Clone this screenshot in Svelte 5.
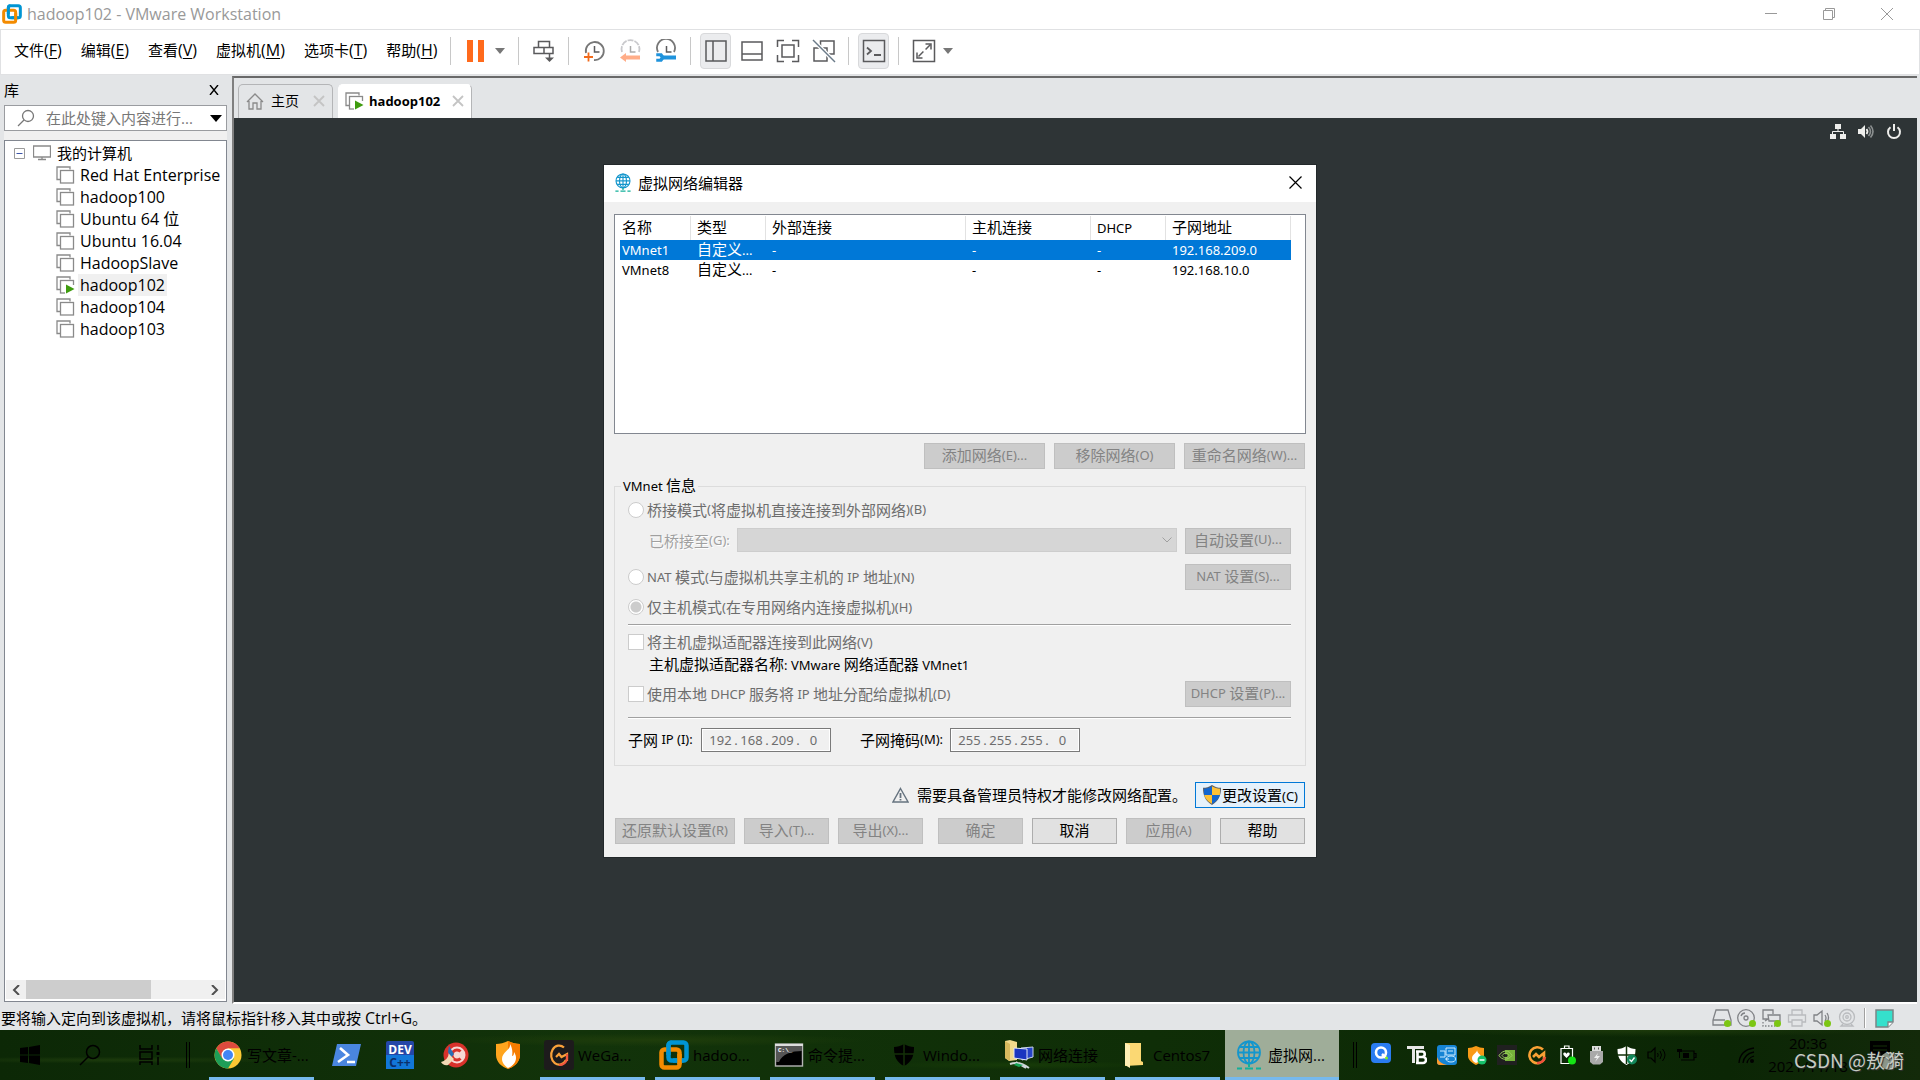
<script lang="ts">
	type Task = { icon: string; label?: string; open?: boolean; active?: boolean };

	const menus = [
		{ label: '文件', key: 'F' },
		{ label: '编辑', key: 'E' },
		{ label: '查看', key: 'V' },
		{ label: '虚拟机', key: 'M' },
		{ label: '选项卡', key: 'T' },
		{ label: '帮助', key: 'H' }
	];

	const tools = [
		[{ icon: 'send', title: '发送 Ctrl+Alt+Del' }],
		[
			{ icon: 'snapshot', title: '拍摄快照' },
			{ icon: 'revert', title: '恢复快照' },
			{ icon: 'manage', title: '管理快照' }
		],
		[
			{ icon: 'sidebar', title: '显示库', pressed: true },
			{ icon: 'thumbs', title: '显示缩略图' },
			{ icon: 'full', title: '全屏' },
			{ icon: 'unity', title: 'Unity' }
		],
		[{ icon: 'console', title: '控制台视图', pressed: true }]
	];

	const machines = [
		'Red Hat Enterprise L',
		'hadoop100',
		'Ubuntu 64 位',
		'Ubuntu 16.04',
		'HadoopSlave',
		'hadoop102',
		'hadoop104',
		'hadoop103'
	];
	const running = 'hadoop102';

	const columns = [
		{ label: '名称', width: 71 },
		{ label: '类型', width: 75 },
		{ label: '外部连接', width: 200 },
		{ label: '主机连接', width: 125 },
		{ label: 'DHCP', width: 75 },
		{ label: '子网地址', width: 125 }
	];
	const networks = [
		['VMnet1', '自定义...', '-', '-', '-', '192.168.209.0'],
		['VMnet8', '自定义...', '-', '-', '-', '192.168.10.0']
	];
	let selected = $state(0);

	const tasks: Task[] = [
		{ icon: 'chrome', label: '写文章-...', open: true },
		{ icon: 'powershell' },
		{ icon: 'dev' },
		{ icon: 'ccleaner' },
		{ icon: 'fire' },
		{ icon: 'wegame', label: 'WeGa...', open: true },
		{ icon: 'vmware', label: 'hadoo...', open: true },
		{ icon: 'cmd', label: '命令提...', open: true },
		{ icon: 'defender', label: 'Windo...', open: true },
		{ icon: 'netfolder', label: '网络连接', open: true },
		{ icon: 'folder', label: 'Centos7', open: true },
		{ icon: 'globe', label: '虚拟网...', open: true, active: true }
	];
	const tray = ['typora', 'intel', 'fireMini', 'nvidia', 'wegameMini', 'health', 'usb', 'shieldOk', 'volume', 'battery', '', 'wifi'];
	const devices = ['disk', 'cd', 'net', 'printer', 'sound', 'webcam'];

	// Latin runs are set smaller than the Chinese around them
	const runs = (text: string) => text.split(/([\x20-\x7e]+)/).filter(Boolean);
	const isLatin = (run: string) => /^[\x20-\x7e]/.test(run);
</script>

{#snippet mix(text: string)}
	{#each runs(text) as run}{#if isLatin(run)}<span class="en">{run}</span>{:else}{run}{/if}{/each}
{/snippet}

{#snippet vmware(size: number)}
	<svg width={size} height={size} viewBox="0 0 30 30" fill="none" stroke-width="4.5" aria-hidden="true">
		<rect x="9.5" y="2.5" width="18" height="18" rx="3" stroke="#0095d3" />
		<rect x="2.5" y="9.5" width="18" height="18" rx="3" stroke="#f38b00" />
		<path d="M9.5 15V5.5a3 3 0 0 1 3-3" stroke="#0095d3" />
		<path d="M14 20.5H24.5" stroke="#0095d3" />
		<path d="M20.5 14v10" stroke="#f38b00" />
	</svg>
{/snippet}

{#snippet globe(w: number, h: number)}
	<svg width={w} height={h} viewBox="0 0 24 30" fill="none" stroke="#1496cc" stroke-width="1.8" aria-hidden="true">
		<circle cx="12" cy="12.5" r="11" />
		<ellipse cx="12" cy="12.5" rx="5.5" ry="11" />
		<path d="M12 1.5v22M1 12.5h22M3 7h18M3 18h18" />
		<path d="M12 23.5V27M8 28.5h8M0 28.5h5M19 28.5h5" stroke="#12b09a" stroke-width="2" />
	</svg>
{/snippet}

{#snippet vmIcon(on: boolean)}
	<svg class="vm-icon" width="19" height="18" viewBox="0 0 19 18" fill="#fff" stroke="#8a8a8a" aria-hidden="true">
		<path d="M14 3.5V1H1V13.5H4" fill="none" stroke-width="1.3" />
		<rect x="4.5" y="4.5" width="13" height="12.5" stroke-width="1.3" />
		{#if on}
			<path d="M9 9h10v9H9z" stroke="none" />
			<path d="M10 8.500v9l8.500-4.500z" fill="#3f9c0f" stroke="none" />
		{/if}
	</svg>
{/snippet}

{#snippet toolIcon(name: string)}
	<svg width="24" height="24" viewBox="0 0 24 24" fill="none" stroke="#5a5a5c" stroke-width="1.5" aria-hidden="true">
		{#if name === 'send'}
			<path d="M6.500 8V2.500h11V8M2 8.500h10v6H2zM12 8.500h9v6h-9" />
			<path d="M17.500 14.500v6" />
			<path d="M13 18.500h9L17.500 23z" fill="#5a5a5c" stroke="none" />
		{:else if name === 'snapshot'}
			<path d="M4 14A9 9 0 1 1 12 21" stroke-width="1.8" stroke="#777" />
			<path d="M12.500 7v6h5" />
			<path d="M2 18h9M6.500 13.500v9" stroke="#f26a1b" stroke-width="1.8" />
		{:else if name === 'revert'}
			<path d="M4 13A9 9 0 1 1 21 13" stroke="#c9c9cc" stroke-width="1.8" stroke-dasharray="6 1" />
			<path d="M12.500 7v6h5" stroke="#aaa" />
			<path d="M22 18.500H7" stroke="#ffad88" stroke-width="4" />
			<path d="M8 14v9l-6-4.500z" fill="#ffad88" stroke="none" />
		{:else if name === 'manage'}
			<path d="M4 13A9 9 0 1 1 20 13" stroke="#777" stroke-width="1.8" />
			<path d="M12.500 7v6h5" />
			<path d="M8 18.500h14" stroke="#1f93dc" stroke-width="4" />
			<path d="M3 15h4.500l2.500 3.500L7.500 22H3v-1.500h3l1.500-2-1.500-2H3z" fill="#1f93dc" stroke="#1f93dc" />
		{:else if name === 'sidebar'}
			<path d="M2 2h20v20H2zM9 2v20" />
		{:else if name === 'thumbs'}
			<path d="M2 3h20v18H2zM2 15h20" />
		{:else if name === 'full'}
			<path d="M1.500 8V1.500H8M16 1.500h6.500V8M22.500 16v6.500H16M8 22.500H1.500V16" />
			<path d="M6 6h12v12H6z" />
		{:else if name === 'unity'}
			<path d="M8.500 9V2H22v13h-7" />
			<path d="M2 9h13v13H2z" />
			<path d="M1 1l22 22" stroke="#fff" stroke-width="4" />
			<path d="M1 1l22 22" stroke="#6a7a88" />
		{:else if name === 'console'}
			<path d="M1.500 1.500h21v21h-21z" />
			<path d="M5 8.500l4 3.500-4 3.500M12 16h7" stroke-width="1.8" />
		{:else if name === 'expand'}
			<path d="M1.500 1.500h21v21h-21z" />
			<path d="M13.500 5H19v5.500M5 13.500V19h5.500" />
			<path d="M18.500 5.500l-13 13" stroke-dasharray="7 3" />
		{/if}
	</svg>
{/snippet}

{#snippet shield(size: number)}
	<svg width={size} height={size} viewBox="0 0 20 20" aria-hidden="true">
		<path d="M10 0c3 2 6 2.800 9 2.800C19 10 17 16 10 20 3 16 1 10 1 2.800 4 2.800 7 2 10 0z" fill="#5a5f66" />
		<path d="M10 1.300V10H2.200C2 8 1.900 6 2 3.800 5 3.700 7.500 3 10 1.300z" fill="#1266cf" />
		<path d="M10 1.300V10h7.800c.2-2 .3-4 .2-6.200-3-.1-5.500-.8-8-2.500z" fill="#fdc136" />
		<path d="M2.200 10H10v8.800C5 16 3 13 2.200 10z" fill="#fdc136" />
		<path d="M17.800 10H10v8.800c5-2.800 7-5.800 7.800-8.800z" fill="#1266cf" />
	</svg>
{/snippet}

{#snippet taskIcon(name: string)}
	{#if name === 'vmware'}
		{@render vmware(30)}
	{:else if name === 'globe'}
		{@render globe(24, 30)}
	{:else}
		<svg width="30" height="30" viewBox="0 0 30 30" aria-hidden="true">
			{#if name === 'chrome'}
				<circle cx="15" cy="15" r="13.5" fill="#fbc934" />
				<path d="M3.300 8.300A13.500 13.500 0 0 1 26.700 8.300H15L9 18.500z" fill="#dd4b3e" />
				<path d="M3.300 8.300A13.500 13.500 0 0 0 15 28.500L21 18.500 9.200 18.500z" fill="#1e9e58" />
				<circle cx="15" cy="15" r="6.5" fill="#fff" />
				<circle cx="15" cy="15" r="5" fill="#4285f4" />
			{:else if name === 'powershell'}
				<path d="M6 4h24l-5 22H1z" fill="#4a86e0" />
				<path d="M9 8l8 7-10 7M16 22h8" fill="none" stroke="#fff" stroke-width="2.6" />
			{:else if name === 'dev'}
				<rect x="1" y="1" width="28" height="28" rx="2" fill="#2447a8" />
				<path d="M1 15h28v14H1z" fill="#1277d8" />
				<text x="15" y="13.5" text-anchor="middle" class="dev-top">DEV</text>
				<text x="15" y="27" text-anchor="middle" class="dev-bottom">C++</text>
			{:else if name === 'ccleaner'}
				<circle cx="17" cy="15" r="12.5" fill="#d8322b" />
				<circle cx="18" cy="15" r="8.5" fill="#f6d8d4" />
				<path d="M21.500 11.500a5 5 0 1 0 0 7" fill="none" stroke="#d8322b" stroke-width="3" />
				<path d="M10 6l5 8-3 4-3-6z" fill="#2a6fb5" />
				<path d="M10 14l5 5-6 6c-3 1-6-1-7-3 4-1 7-4 8-8z" fill="#f3d9b5" />
			{:else if name === 'fire'}
				<path d="M15 1c4 2 8 3 12 3v11c0 7-6 12-12 14C9 27 3 22 3 15V4c4 0 8-1 12-3z" fill="#ffa51e" />
				<path d="M15 1c4 2 8 3 12 3v11c0 7-6 12-12 14z" fill="#f57c00" />
				<path d="M17 4c1 6-8 8-8 15 0 4 3 7 6 9 5-2 8-6 8-10 0-3-1-4-2-6 0 3-1 4-2 4 1-4 0-9-2-12z" fill="#fff" />
			{:else if name === 'wegame'}
				<rect width="30" height="30" rx="3" fill="#1d1b1c" />
				<path d="M20 7.500A8 9.500 0 1 0 22 20M12 17l3-3 2.500 3 5.500-3v7" fill="none" stroke="#f9a13a" stroke-width="2.2" />
				<path d="M15 25c4 0 7-2 8-6v-5" fill="none" stroke="#f2573e" stroke-width="2.2" />
			{:else if name === 'cmd'}
				<rect x="1.5" y="4" width="27" height="22" fill="#000" stroke="#b5b5b5" stroke-width="1.4" />
				<path d="M2 5h26v6C18 11 8 14 5 22H2z" fill="#555" />
				<path d="M1 4h28v2H1z" fill="#ddd" />
				<text x="4" y="12" class="cmd-text">C:\_</text>
			{:else if name === 'defender'}
				<path d="M15 4c3 2 7 3 10 3 0 9-2 15-10 19C7 22 5 16 5 7c3 0 7-1 10-3z" fill="#000" />
				<path d="M15 4v22M5 14h20" stroke="#143008" stroke-width="1.5" />
			{:else if name === 'netfolder'}
				<path d="M1 1l5-1 7 2v18l-8 1-4-3z" fill="#f0d98c" />
				<path d="M1 1l5 3v17l-5-3z" fill="#d7b95e" />
				<path d="M17 8l12-1v10l-11 3z" fill="#2744c8" stroke="#c9d4ea" />
				<path d="M10 8l13 1v11l-13-2z" fill="#1a35c0" stroke="#dfe6f4" />
				<path d="M6 24c6-2 12-1 19 4M12 22l10 6" fill="none" stroke="#cfd5d9" stroke-width="2" />
				<path d="M12 23l7 2-4 2-5-2z" fill="#18a558" />
			{:else if name === 'folder'}
				<path d="M6 3h16v18l2 1v3l-18 1z" fill="#fbd873" />
				<path d="M6 3l5 2v23l-5-3z" fill="#fff0b5" />
			{/if}
		</svg>
	{/if}
{/snippet}

{#snippet trayIcon(name: string)}
	<svg width="20" height="20" viewBox="0 0 20 20" fill="none" aria-hidden="true">
		{#if name === 'q'}
			<rect width="20" height="20" rx="4" fill="#2a7cf0" />
			<circle cx="10" cy="9.5" r="5" stroke="#fff" stroke-width="2.6" />
			<path d="M11 11l4 4" stroke="#fff" stroke-width="2.5" />
			<circle cx="15.5" cy="15" r="1.5" fill="#7ff01c" />
		{:else if name === 'typora'}
			<path d="M0 2.500h17M6.500 2v16" stroke="#e6e6e6" stroke-width="3" />
			<path d="M10.500 5.500v13M9 6.500h6a2.500 2.500 0 0 1 0 5.500h-5 6a3 3 0 0 1 0 6H9" stroke="#fff" stroke-width="2.6" />
		{:else if name === 'intel'}
			<rect width="20" height="20" rx="3" fill="#1684d4" />
			<path d="M0 12c2 5 5 7 10 8H3a3 3 0 0 1-3-3z" fill="#ff9c2b" />
			<path d="M9 3h9v7H9zM3 6h5v6H3M11 6h5M8 14h4" stroke="#cbeaff" />
			<ellipse cx="14" cy="14" rx="4.5" ry="3" stroke="#cbeaff" />
		{:else if name === 'fireMini'}
			<path d="M9 1c3 1 5 2 8 2v8c0 4-4 7-8 9-4-2-8-5-8-9V3c3 0 5-1 8-2z" fill="#f99a17" />
			<path d="M10 4c1 4-5 5-5 9 0 3 2 4 4 5 3-1 5-3 5-6 0-3-4-3-4-8z" fill="#fff" />
			<circle cx="15" cy="15" r="4.5" fill="#18c06b" />
			<path d="M12.500 15h5" stroke="#fff" stroke-width="1.5" />
		{:else if name === 'nvidia'}
			<rect width="20" height="20" fill="#202020" />
			<path d="M8 5h10v11H8z" fill="#76b13a" />
			<path d="M2 10.500c4-6 10-6 13 0-4 5-10 5-13 0zM5 10.500c2-3 6-3 7 0-2 3-5 3-7 0z" stroke="#9bd05e" />
			<circle cx="9" cy="10.5" r="1.5" fill="#202020" />
		{:else if name === 'wegameMini'}
			<path d="M16 4.500A8 8 0 1 0 17.500 14M6 12l3-3 3 3 5-4v6" stroke="#f9a135" stroke-width="2.6" />
			<path d="M10 18c4 0 7-2 8-6" stroke="#ef513d" stroke-width="2.6" />
		{:else if name === 'health'}
			<path d="M4 3.500h11.500v15H4zM7.500 3V1H12v2" stroke="#fff" stroke-width="1.2" />
			<path d="M9.500 13L6.500 10c-1-3 2-3 3-1 1-2 4-2 3 1z" fill="#fff" />
			<circle cx="15" cy="15.5" r="4" fill="#15e415" />
		{:else if name === 'usb'}
			<path d="M5 1h9v5H5z" fill="#ddd" />
			<path d="M7.500 2.500v2M11.500 2.500v2" stroke="#555" />
			<path d="M3 6h13v11l-3 2.500H6L3 17z" fill="#a9a9a9" />
			<path d="M11 8l-4 5h3l-2 4 5-6h-3z" fill="#eee" />
		{:else if name === 'shieldOk'}
			<path d="M9.500 1c3 2 6 3 9 3 0 8-2 12-9 16-7-4-9-8-9-16 3 0 6-1 9-3z" fill="#fff" />
			<path d="M9.500 1v18M0 10h19" stroke="#122f08" stroke-width="1.5" />
			<circle cx="15" cy="14.5" r="5" fill="#12875a" />
			<path d="M12.500 14.500l2 2 3-4" stroke="#fff" stroke-width="1.3" />
		{:else if name === 'volume'}
			<path d="M1 7h3l4-4v14l-4-4H1z" stroke="#000" stroke-width="1.2" />
			<path d="M10.500 8q1.500 2 0 4M13 6q3 4 0 8M15.500 4q5 6 0 12" stroke="#000" />
		{:else if name === 'battery'}
			<path d="M4 6h13v9H4M17.500 8.500h1.500v4h-1.500" stroke="#000" stroke-width="1.2" />
			<path d="M6 8h6v5H6zM0 4h5v3H0zM2 7h1v6H2z" fill="#000" />
		{:else if name === 'wifi'}
			<path d="M2 18Q3 5 17 3M6 18q1-9 11-11M10 18q1-5 7-7" stroke="#000" stroke-width="1.3" />
			<circle cx="15" cy="16" r="2" fill="#000" />
		{/if}
	</svg>
{/snippet}

{#snippet deviceIcon(name: string)}
	<svg width="20" height="20" viewBox="0 0 20 20" fill="none" stroke="#808286" stroke-width="1.3" aria-hidden="true">
		{#if name === 'disk'}
			<path d="M4 2h12l3 10v5H1v-5zM1 12h12" />
		{:else if name === 'cd'}
			<circle cx="9" cy="10" r="8.3" />
			<circle cx="9" cy="10" r="2" />
			<path d="M4 8q1-3 4-3" />
		{:else if name === 'net'}
			<path d="M6 11H1V2h10v4M6 7h12v6H7zM3 13l3-2" />
			<path d="M1 14v4h12" stroke-dasharray="1.5 1.5" />
		{:else if name === 'printer'}
			<path d="M5 7V2h10v5M5 14H1.500V7h17v7H15M5 12h10v6H5z" stroke="#b9bbbe" />
		{:else if name === 'sound'}
			<path d="M2 7h3l5-4v14l-5-4H2zM13 7q2 3 0 6M15 5q3 5 0 9" />
		{:else if name === 'webcam'}
			<g stroke="#b9bbbe">
				<circle cx="10" cy="9" r="7.5" />
				<circle cx="10" cy="9" r="4" />
				<circle cx="10" cy="9" r="1.3" />
				<path d="M6 16l-2 2h12l-2-2" />
			</g>
		{/if}
		{#if name === 'disk' || name === 'cd' || name === 'net' || name === 'sound'}
			<circle cx="15.5" cy="15.5" r="3.5" fill="#7cc613" stroke="none" />
		{/if}
	</svg>
{/snippet}

{#snippet ipField(id: string, parts: string[])}
	<div class="ip-field">
		{#each parts as part, i}
			{#if i > 0}<span class="dot">.</span>{/if}
			<input id={i === 0 ? id : undefined} aria-label={i > 0 ? `${id} ${i + 1}` : undefined} type="text" value={part} disabled />
		{/each}
	</div>
{/snippet}

<div class="app">
	<header class="titlebar">
		{@render vmware(20)}
		<h1>hadoop102 - VMware Workstation</h1>
		<div class="window-controls">
			<button type="button" aria-label="最小化">
				<svg width="14" height="14" viewBox="0 0 14 14" stroke="#999"><path d="M1 6.500h12" /></svg>
			</button>
			<button type="button" aria-label="还原">
				<svg width="14" height="14" viewBox="0 0 14 14" fill="none" stroke="#999">
					<path d="M1.500 3.500h9v9h-9zM3.500 3V1.500h9v9H11" />
				</svg>
			</button>
			<button type="button" aria-label="关闭">
				<svg width="14" height="14" viewBox="0 0 14 14" stroke="#999"><path d="M1 1l12 12M13 1L1 13" /></svg>
			</button>
		</div>
	</header>

	<div class="menubar">
		<nav class="menus">
			{#each menus as menu}
				<button type="button">{menu.label}<span>(<u>{menu.key}</u>)</span></button>
			{/each}
		</nav>
		<span class="sep"></span>
		<div class="tool-group">
			<button type="button" class="tool" aria-label="挂起">
				<svg width="17" height="22" viewBox="0 0 17 22" fill="#ff6a1c"><path d="M0 0h6v22H0zM11 0h6v22h-6z" /></svg>
			</button>
			<button type="button" class="caret" aria-label="电源选项">
				<svg width="10" height="6" viewBox="0 0 10 6" fill="#777"><path d="M0 0h10L5 6z" /></svg>
			</button>
		</div>
		<span class="sep"></span>
		{#each tools as group}
			{#each group as tool}
				<button type="button" class="tool" class:pressed={tool.pressed} aria-label={tool.title}>
					{@render toolIcon(tool.icon)}
				</button>
			{/each}
			<span class="sep"></span>
		{/each}
		<div class="tool-group">
			<button type="button" class="tool" aria-label="拉伸">{@render toolIcon('expand')}</button>
			<button type="button" class="caret" aria-label="拉伸选项">
				<svg width="10" height="6" viewBox="0 0 10 6" fill="#777"><path d="M0 0h10L5 6z" /></svg>
			</button>
		</div>
	</div>

	<div class="workspace">
		<aside class="library">
			<div class="library-head">
				<h2>库</h2>
				<button type="button" aria-label="关闭库">
					<svg width="10" height="10" viewBox="0 0 10 10" stroke="#000" stroke-width="1.4"><path d="M1 0l8 10M9 0L1 10" /></svg>
				</button>
			</div>
			<div class="search">
				<svg width="18" height="18" viewBox="0 0 18 18" fill="none" stroke="#777" stroke-width="1.3" aria-hidden="true">
					<circle cx="11" cy="7" r="5.5" /><path d="M7 11l-6 6" />
				</svg>
				<input type="text" aria-label="搜索" placeholder="在此处键入内容进行..." />
				<button type="button" aria-label="搜索选项">
					<svg width="12" height="7" viewBox="0 0 12 7"><path d="M0 0h12L6 7z" /></svg>
				</button>
			</div>
			<div class="tree">
				<ul>
					<li class="root">
						<svg width="11" height="11" viewBox="0 0 11 11" fill="none" stroke="#9a9a9a" aria-hidden="true">
							<path d="M.5.5h10v10H.5z" /><path d="M2.500 5.500h6" stroke="#3c55a8" />
						</svg>
						<svg width="18" height="16" viewBox="0 0 18 16" fill="none" stroke="#8a8a8a" aria-hidden="true">
							<path d="M.5 1h17v11H.5zM9 12v2M5 14.500h8" stroke-width="1.3" />
						</svg>
						<span>我的计算机</span>
					</li>
					{#each machines as name}
						<li>
							{@render vmIcon(name === running)}
							<span class="machine" class:current={name === running}>{name}</span>
						</li>
					{/each}
				</ul>
				<div class="scrollbar">
					<button type="button" aria-label="向左滚动">
						<svg width="8" height="10" viewBox="0 0 8 10" fill="none" stroke="#505050" stroke-width="2"><path d="M7 0L2 5l5 5" /></svg>
					</button>
					<div class="track"><div class="thumb"></div></div>
					<button type="button" aria-label="向右滚动">
						<svg width="8" height="10" viewBox="0 0 8 10" fill="none" stroke="#505050" stroke-width="2"><path d="M1 0l5 5-5 5" /></svg>
					</button>
				</div>
			</div>
		</aside>

		<main class="console">
			<div class="tabs">
				<div class="tab home">
					<svg width="18" height="17" viewBox="0 0 18 17" fill="none" stroke="#8a8a8a" stroke-width="1.3" aria-hidden="true">
						<path d="M1 9l8-8 8 8M3 8v8h4v-6h4v6h4V8" />
					</svg>
					<span>主页</span>
					<button type="button" aria-label="关闭主页">
						<svg width="12" height="12" viewBox="0 0 12 12" stroke="#c4c4c4" stroke-width="1.8"><path d="M1 1l10 10M11 1L1 11" /></svg>
					</button>
				</div>
				<div class="tab open">
					{@render vmIcon(true)}
					<span>hadoop102</span>
					<button type="button" aria-label="关闭 hadoop102">
						<svg width="12" height="12" viewBox="0 0 12 12" stroke="#c4c4c4" stroke-width="1.8"><path d="M1 1l10 10M11 1L1 11" /></svg>
					</button>
				</div>
			</div>
			<div class="screen">
				<div class="guest-status">
					<svg width="16" height="16" viewBox="0 0 16 16" fill="#eeeeec">
						<path d="M5 0h6v5H5zM0 10h6v5H0zM10 10h6v5h-6z" /><path d="M8 5v3M2.500 10V7.500h11V10" fill="none" stroke="#eeeeec" />
					</svg>
					<svg width="16" height="16" viewBox="0 0 16 16" fill="#eeeeec">
						<path d="M0 5h3l4-4v13l-4-4H0z" />
						<path d="M8.500 5q2 2.500 0 5" fill="none" stroke="#eeeeec" stroke-width="1.8" />
						<path d="M10.500 3q4 4.500 0 9M12.500 1.500q5 6 0 12" fill="none" stroke="#8b8f90" stroke-width="1.6" />
					</svg>
					<svg width="16" height="16" viewBox="0 0 16 16" fill="none" stroke="#eeeeec" stroke-width="2">
						<path d="M8 0v7M4.500 3.200a6 6 0 1 0 7 0" />
					</svg>
				</div>
			</div>
		</main>
	</div>

	<footer class="statusbar">
		<p>要将输入定向到该虚拟机，请将鼠标指针移入其中或按 <span>Ctrl+G</span>。</p>
		<div class="devices">
			{#each devices as device}
				{@render deviceIcon(device)}
			{/each}
			<span class="device-sep"></span>
			<svg width="19" height="19" viewBox="0 0 19 19" aria-hidden="true">
				<path d="M1 1h17v12l-5 5H1z" fill="#35e0cc" stroke="#7b8586" stroke-width="1.5" />
				<path d="M18 13h-5v5" fill="#fff" stroke="#7b8586" stroke-width="1.3" />
			</svg>
		</div>
	</footer>

	<div class="taskbar">
		<button type="button" class="shell" aria-label="开始">
			<svg width="20" height="20" viewBox="0 0 20 20"><path d="M0 3l8-1v7.500H0zM9 2l11-2v9.500H9zM0 10.500h8V18l-8-1zM9 10.500h11V20L9 18z" /></svg>
		</button>
		<button type="button" class="shell" aria-label="搜索">
			<svg width="22" height="22" viewBox="0 0 22 22" fill="none" stroke="#000" stroke-width="1.5"><circle cx="14" cy="8" r="6.5" /><path d="M9.500 12.500L1 21" /></svg>
		</button>
		<button type="button" class="shell" aria-label="任务视图">
			<svg width="22" height="20" viewBox="0 0 22 20" fill="none" stroke="#000" stroke-width="1.5">
				<path d="M1 0v4h12V0M1 7h12v7H1zM1 20v-3h12v3M19 0v5M19 12v8" /><path d="M17.500 7h3v3h-3z" fill="#000" stroke="none" />
			</svg>
		</button>
		<span class="grip"></span>
		<div class="tasks">
			{#each tasks as task}
				<button type="button" class="task" class:open={task.open} class:active={task.active} aria-label={task.label ?? task.icon}>
					{@render taskIcon(task.icon)}
					{#if task.label}<span>{task.label}</span>{/if}
				</button>
			{/each}
		</div>
		<span class="grip"></span>
		<div class="tray">
			<span class="first">{@render trayIcon('q')}</span>
			{#each tray as item}
				<span>{@render trayIcon(item)}</span>
			{/each}
		</div>
		<div class="clock">
			<time>20:36</time>
			<time>2021/11/18</time>
		</div>
		<div class="notices">
			<svg width="30" height="34" viewBox="0 0 30 34" aria-hidden="true">
				<path d="M2 3h20v16H13l-4 4v-4H2z" fill="#000" />
				<path d="M5 8h14M5 12h14" stroke="#143008" />
				<circle cx="21" cy="23" r="9" fill="#8b9589" />
			</svg>
		</div>
		<span class="watermark">CSDN @敖漪</span>
	</div>

	<div class="dialog" role="dialog" aria-labelledby="editor-title">
		<div class="dialog-head">
			{@render globe(16, 19)}
			<h2 id="editor-title">虚拟网络编辑器</h2>
			<button type="button" aria-label="关闭">
				<svg width="13" height="13" viewBox="0 0 13 13" stroke="#000" stroke-width="1.2"><path d="M.5.5l12 12M12.500.5l-12 12" /></svg>
			</button>
		</div>
		<div class="dialog-body">
			<div class="list">
				<table>
					<colgroup>
						{#each columns as column}<col style="width: {column.width}px" />{/each}
					</colgroup>
					<thead>
						<tr>
							{#each columns as column}<th scope="col">{@render mix(column.label)}</th>{/each}
						</tr>
					</thead>
					<tbody>
						{#each networks as row, i}
							<tr class:selected={selected === i} onclick={() => (selected = i)}>
								{#each row as cell}<td>{@render mix(cell)}</td>{/each}
							</tr>
						{/each}
					</tbody>
				</table>
			</div>

			<div class="actions end">
				<button type="button" class="btn wide" disabled>{@render mix('添加网络(E)...')}</button>
				<button type="button" class="btn wide" disabled>{@render mix('移除网络(O)')}</button>
				<button type="button" class="btn wide" disabled>{@render mix('重命名网络(W)...')}</button>
			</div>

			<fieldset>
				<legend>{@render mix('VMnet 信息')}</legend>
				<div class="row first-row">
					<label class="off"><input type="radio" name="mode" disabled />{@render mix('桥接模式(将虚拟机直接连接到外部网络)(B)')}</label>
				</div>
				<div class="row bridge">
					<label class="etched" for="bridge">{@render mix('已桥接至(G):')}</label>
					<div class="select">
						<select id="bridge" disabled><option></option></select>
						<svg width="10" height="6" viewBox="0 0 10 6" fill="none" stroke="#a0a0a0" aria-hidden="true"><path d="M.5.5L5 5 9.500.5" /></svg>
					</div>
					<button type="button" class="btn side" disabled>{@render mix('自动设置(U)...')}</button>
				</div>
				<div class="row tall">
					<label class="off"><input type="radio" name="mode" disabled />{@render mix('NAT 模式(与虚拟机共享主机的 IP 地址)(N)')}</label>
					<button type="button" class="btn side" disabled>{@render mix('NAT 设置(S)...')}</button>
				</div>
				<div class="row">
					<label class="off"><input type="radio" name="mode" checked disabled />{@render mix('仅主机模式(在专用网络内连接虚拟机)(H)')}</label>
				</div>
				<hr />
				<div class="row">
					<label class="off"><input type="checkbox" disabled />{@render mix('将主机虚拟适配器连接到此网络(V)')}</label>
				</div>
				<div class="row">
					<p class="adapter">{@render mix('主机虚拟适配器名称: VMware 网络适配器 VMnet1')}</p>
				</div>
				<div class="row tall">
					<label class="off"><input type="checkbox" disabled />{@render mix('使用本地 DHCP 服务将 IP 地址分配给虚拟机(D)')}</label>
					<button type="button" class="btn side" disabled>{@render mix('DHCP 设置(P)...')}</button>
				</div>
				<hr class="tight" />
				<div class="row subnet">
					<label for="subnet-ip">{@render mix('子网 IP (I):')}</label>
					{@render ipField('subnet-ip', ['192', '168', '209', '0'])}
					<label class="mask" for="subnet-mask">{@render mix('子网掩码(M):')}</label>
					{@render ipField('subnet-mask', ['255', '255', '255', '0'])}
				</div>
			</fieldset>

			<div class="elevate">
				<svg width="17" height="16" viewBox="0 0 17 16" fill="none" stroke="#66737f" stroke-width="1.4" aria-hidden="true">
					<path d="M8.500 1.500l7.500 13.500H1z" /><path d="M8.500 6v5M8.500 12v1.500" stroke-width="1.8" />
				</svg>
				<p>需要具备管理员特权才能修改网络配置。</p>
				<button type="button" class="btn primary">{@render shield(20)}<span>{@render mix('更改设置(C)')}</span></button>
			</div>

			<div class="actions">
				<button type="button" class="btn restore" disabled>{@render mix('还原默认设置(R)')}</button>
				<button type="button" class="btn" disabled>{@render mix('导入(T)...')}</button>
				<button type="button" class="btn" disabled>{@render mix('导出(X)...')}</button>
				<button type="button" class="btn ok" disabled>确定</button>
				<button type="button" class="btn">取消</button>
				<button type="button" class="btn" disabled>{@render mix('应用(A)')}</button>
				<button type="button" class="btn">帮助</button>
			</div>
		</div>
	</div>
</div>

<style>
	:global(body) {
		margin: 0;
		background: #e3e5e7;
	}

	.app {
		position: relative;
		display: flex;
		flex-direction: column;
		min-height: 100vh;
		overflow: hidden;
		background: #e3e5e7;
		color: #000;
		font: 15px/20px 'Open Sans', 'Noto Sans CJK SC', sans-serif;
	}

	.app * {
		box-sizing: border-box;
	}

	h1,
	h2,
	p,
	ul {
		margin: 0;
		padding: 0;
		font-size: 15px;
		font-weight: 400;
		list-style: none;
	}

	button,
	input,
	select {
		margin: 0;
		padding: 0;
		border: 0;
		border-radius: 0;
		background: none;
		color: inherit;
		font: inherit;
	}

	svg {
		display: block;
		flex: none;
	}

	/* title bar */
	.titlebar {
		display: flex;
		align-items: center;
		height: 29px;
		padding: 0 4px 1px 2px;
		background: #fff;
	}

	.titlebar h1 {
		flex: 1;
		margin-left: 5px;
		color: #999;
		font-size: 16px;
	}

	.window-controls {
		display: flex;
	}

	.window-controls button {
		display: flex;
		align-items: center;
		justify-content: center;
		width: 58px;
		height: 28px;
	}

	/* menu and toolbar */
	.menubar {
		display: flex;
		align-items: center;
		gap: 5px;
		height: 46px;
		padding: 0 0 2px 13px;
		border: 1px solid #e0e1e3;
		background: #fff;
	}

	.menus {
		display: flex;
		gap: 19px;
		margin-right: 4px;
	}

	.menus button {
		padding-bottom: 2px;
		white-space: nowrap;
	}

	.menus span,
	.statusbar span {
		font-size: 16px;
		line-height: 1;
	}

	.menus u {
		text-underline-offset: 2px;
	}

	.sep {
		width: 1px;
		height: 28px;
		margin: 0 4px;
		background: #c8c8c8;
	}

	.tool-group {
		display: flex;
	}

	.tool {
		display: flex;
		align-items: center;
		justify-content: center;
		width: 31px;
		height: 36px;
		border: 1px solid transparent;
		border-radius: 4px;
	}

	.tool.pressed {
		border-color: #d8d9db;
		background: #ebecee;
	}

	.caret {
		display: flex;
		align-items: center;
		justify-content: center;
		width: 18px;
	}

	/* library */
	.workspace {
		display: flex;
		flex: 1;
	}

	.library {
		display: flex;
		flex-direction: column;
		width: 232px;
		padding: 0 5px 2px 4px;
	}

	.library-head {
		display: flex;
		align-items: center;
		justify-content: space-between;
		height: 30px;
		padding-right: 8px;
	}

	.search {
		display: flex;
		align-items: center;
		height: 26px;
		padding: 0 4px 0 12px;
		border: 1px solid #9a9ca0;
		background: #fff;
	}

	.search input {
		flex: 1;
		min-width: 0;
		margin-left: 11px;
	}

	.search input::placeholder {
		color: #777;
		opacity: 1;
	}

	.tree {
		display: flex;
		flex: 1;
		flex-direction: column;
		margin-top: 9px;
		padding: 1px 1px 2px;
		border: 1px solid #828790;
		background: #fff;
		box-shadow: 0 -9px 0 #f0f0f0;
	}

	.tree ul {
		flex: 1;
		overflow: hidden;
	}

	.tree li {
		display: flex;
		align-items: center;
		height: 22px;
		padding-left: 50px;
		white-space: nowrap;
	}

	.tree .root {
		gap: 6px;
		padding-left: 8px;
	}

	.root svg + svg {
		margin-left: 2px;
	}

	.machine {
		margin-left: 3px;
		padding: 0 2px;
		font-size: 16px;
		line-height: 22px;
	}

	.machine.current {
		background: #f0f0f0;
	}

	.scrollbar {
		display: flex;
		height: 19px;
		background: #f0f0f0;
	}

	.scrollbar button {
		display: flex;
		align-items: center;
		justify-content: center;
		width: 20px;
	}

	.track {
		flex: 1;
	}

	.thumb {
		width: 70%;
		height: 100%;
		background: #cdcdcd;
	}

	/* console */
	.console {
		display: flex;
		flex: 1;
		flex-direction: column;
		margin: 1px 3px 0 0;
		border-top: 2px solid #696969;
		border-bottom: 2px solid #fff;
		border-left: 2px solid #808080;
	}

	.tabs {
		display: flex;
		gap: 5px;
		height: 40px;
		padding: 6px 0 0 4px;
	}

	.tab {
		display: flex;
		align-items: center;
		gap: 7px;
		height: 34px;
		padding: 0 7px 1px;
		border: 1px solid #b4b5b7;
		border-bottom: 0;
		border-radius: 5px 5px 0 0;
		font-size: 14px;
	}

	.tab.open {
		gap: 5px;
		padding-left: 6px;
		border-color: #fff #b4b5b7 #fff #fff;
		background: #fff;
		font-size: 13px;
		font-weight: 700;
	}

	.tab button {
		margin-left: 7px;
	}

	.screen {
		flex: 1;
		padding: 6px 15px;
		background: #2e3436;
	}

	.guest-status {
		display: flex;
		justify-content: flex-end;
		gap: 12px;
	}

	/* status bar */
	.statusbar {
		display: flex;
		align-items: center;
		justify-content: space-between;
		height: 26px;
		padding: 2px 26px 0 1px;
	}

	.devices {
		display: flex;
		align-items: center;
		gap: 5px;
	}

	.device-sep {
		width: 2px;
		height: 20px;
		margin: 0 4px 0 2px;
		border-left: 1px solid #a0a0a0;
		background: #fff;
	}

	/* taskbar */
	.taskbar {
		position: relative;
		display: flex;
		align-items: stretch;
		height: 50px;
		background:
			radial-gradient(ellipse at 6% 60%, #1c3a0c 0, transparent 8%),
			radial-gradient(ellipse at 34% 20%, #1f3d0b 0, transparent 12%),
			radial-gradient(ellipse at 53% 70%, #173b08 0, transparent 9%),
			radial-gradient(ellipse at 86% 0, #1d3a0b 0, transparent 10%),
			linear-gradient(90deg, #0c2806, #12330a 30%, #0f2e07 60%, #0b2605 90%, #132a0a);
	}

	.shell {
		display: flex;
		align-items: center;
		justify-content: center;
		width: 60px;
	}

	.grip {
		width: 4px;
		margin: 12px 14px 12px 6px;
		border: 1px solid #000;
		border-width: 0 1px;
	}

	.tasks {
		display: flex;
	}

	.task {
		display: flex;
		align-items: center;
		justify-content: center;
		width: 54px;
	}

	.task.open {
		gap: 4px;
		justify-content: flex-start;
		width: 105px;
		margin: 0 5px;
		padding: 3px 0 0 4px;
		border-bottom: 3px solid #76b9ed;
		white-space: nowrap;
	}

	.task.open.active {
		width: 114px;
		margin: 0;
		padding-left: 12px;
		gap: 7px;
		background: #9fad99;
	}

	.tasks + .grip {
		margin-right: 9px;
		margin-left: 14px;
	}

	.tray {
		display: flex;
		align-items: center;
	}

	.tray span {
		display: flex;
		justify-content: center;
		width: 30px;
	}

	.tray .first {
		margin-right: 6px;
		padding-bottom: 4px;
	}

	.clock {
		display: flex;
		flex-direction: column;
		justify-content: center;
		width: 92px;
		text-align: center;
		line-height: 23px;
	}

	.notices {
		display: flex;
		align-items: center;
		margin-left: 14px;
	}

	.watermark {
		position: absolute;
		right: 16px;
		bottom: 6px;
		color: #c6cbc4;
		font: 19px/28px 'Noto Sans CJK SC', sans-serif;
		text-shadow: 1px 1px 1px #333;
	}

	.dev-top,
	.dev-bottom {
		fill: #fff;
		font: 700 12px 'Open Sans', sans-serif;
	}

	.dev-bottom {
		fill: #0b2f6b;
	}

	.cmd-text {
		fill: #fff;
		font: 700 6px 'Liberation Mono', monospace;
	}

	/* network editor */
	.dialog {
		position: absolute;
		top: 165px;
		left: 50%;
		width: 712px;
		transform: translateX(-50%);
		background: #f0f0f0;
		box-shadow: 0 0 0 1px #22282a;
		font-family: 'Noto Sans', 'Noto Sans CJK SC', sans-serif;
	}

	.en {
		font-size: 13px;
		line-height: 1;
	}

	.dialog-head {
		display: flex;
		align-items: center;
		height: 37px;
		padding: 0 14px 2px 11px;
		background: #fff;
	}

	.dialog-head h2 {
		flex: 1;
		margin-left: 7px;
	}

	.dialog-body {
		padding: 12px 10px 13px;
	}

	.list {
		height: 220px;
		padding: 1px 5px;
		border: 1px solid #828790;
		background: #fff;
	}

	table {
		border-spacing: 0;
		table-layout: fixed;
		width: 671px;
	}

	th,
	td {
		height: 20px;
		padding: 0 2px 2px;
		font-weight: 400;
		line-height: 18px;
		text-align: left;
		white-space: nowrap;
	}

	th {
		height: 24px;
		border-right: 1px solid #e2e2e2;
	}

	th + th,
	td + td {
		padding-left: 6px;
	}

	.selected {
		background: #0078d7;
		color: #fff;
	}

	.actions {
		display: flex;
		gap: 9px;
		margin-top: 10px;
		padding: 0 1px;
	}

	.actions.end {
		justify-content: flex-end;
		margin-top: 9px;
	}

	.btn {
		display: flex;
		align-items: center;
		justify-content: center;
		width: 85px;
		height: 26px;
		padding-bottom: 2px;
		border: 1px solid #adadad;
		background: #e1e1e1;
		white-space: pre;
	}

	.btn:disabled {
		border-color: #bfbfbf;
		background: #ccc;
		color: #838383;
	}

	.btn.wide {
		width: 121px;
	}

	.btn.restore {
		width: 120px;
	}

	.btn.ok {
		margin-left: 6px;
	}

	.btn.side {
		width: 106px;
		margin-left: auto;
	}

	.btn.primary {
		width: 110px;
		padding-bottom: 0;
		border-color: #0078d7;
		background: #e5f1fb;
	}

	fieldset {
		min-width: 0;
		margin: 7px 0 0;
		padding: 0 14px 5px 13px;
		border: 1px solid #dcdcdc;
	}

	legend {
		height: 20px;
		margin-left: -7px;
		padding: 0 2px;
		line-height: 18px;
	}

	.row {
		display: flex;
		align-items: center;
		height: 22px;
	}

	.first-row {
		height: 27px;
	}

	.row.bridge {
		height: 35px;
	}

	.row.tall {
		height: 38px;
	}

	.row.subnet {
		height: 41px;
	}

	.row label {
		display: flex;
		align-items: center;
		white-space: pre;
	}

	.off {
		color: #6d6d6d;
	}

	.off input {
		flex: none;
		width: 16px;
		height: 16px;
		margin-right: 3px;
		border: 1px solid #ccc;
		background: #fff;
		appearance: none;
	}

	.off input[type='radio'] {
		border-radius: 50%;
	}

	.off input:checked {
		background: radial-gradient(circle, #ccc 5px, #fff 6px);
	}

	.etched {
		box-sizing: content-box;
		width: 88px;
		padding-left: 21px;
		color: #a0a0a0;
		text-shadow: 1px 1px 0 #fff;
	}

	.select {
		position: relative;
		flex: 1;
		margin: 0 8px 2px 0;
	}

	.select select {
		display: block;
		width: 100%;
		height: 24px;
		border: 1px solid #bfbfbf;
		background: #ccc;
		appearance: none;
	}

	.select svg {
		position: absolute;
		top: 9px;
		right: 5px;
	}

	hr {
		height: 2px;
		margin: 6px 0 5px;
		border: 0;
		border-top: 1px solid #a0a0a0;
		background: #fff;
	}

	hr.tight {
		margin: 4px 0 0;
	}

	.adapter {
		padding-left: 21px;
	}

	.subnet label {
		width: 73px;
	}

	.subnet .mask {
		width: 90px;
		margin-left: 29px;
	}

	.ip-field {
		display: flex;
		align-items: center;
		width: 130px;
		height: 24px;
		padding-left: 6px;
		border: 1px solid #7a7a7a;
		box-shadow: inset 0 0 0 1px #fff;
		color: #6d6d6d;
		font-size: 13px;
	}

	.ip-field input {
		width: 25px;
		text-align: center;
	}

	.dot {
		width: 6px;
		text-align: center;
	}

	.elevate {
		display: flex;
		align-items: center;
		justify-content: flex-end;
		margin-top: 16px;
		padding-right: 1px;
	}

	.elevate p {
		margin: 0 8px;
	}
</style>
